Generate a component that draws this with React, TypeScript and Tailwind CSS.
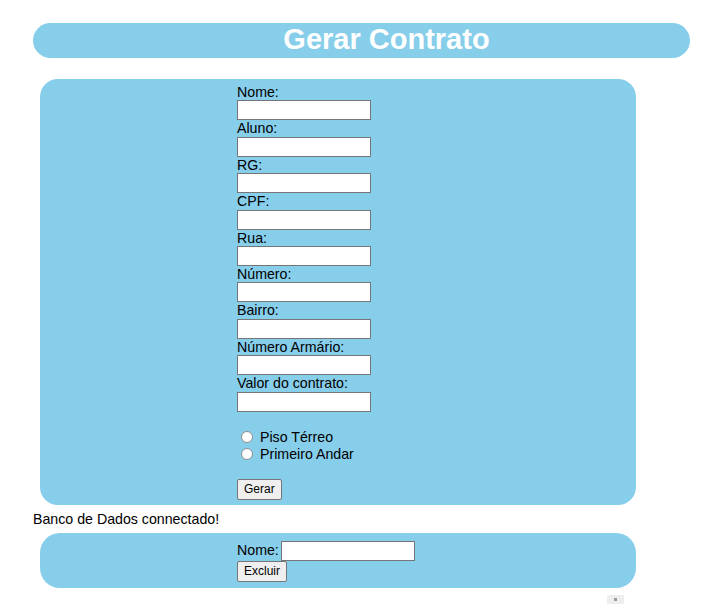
import { useState } from 'react';

const fields = ['Nome:', 'Aluno:', 'RG:', 'CPF:', 'Rua:', 'Número:', 'Bairro:', 'Número Armário:', 'Valor do contrato:'];

export default function App() {
  const [andar, setAndar] = useState('');

  return (
    <div className="w-[710px] min-h-[604px] bg-white pt-[23px] pl-[33px] font-['Liberation_Sans',Arial,sans-serif] text-[14.2px] leading-[16.4px] text-black overflow-hidden">
      <h1 className="w-[657px] h-[35px] rounded-full bg-[#87ceeb] text-center pl-[50px] text-white font-bold text-[29px] leading-[33px]">
        Gerar Contrato
      </h1>

      <form className="mt-[21px] ml-[7px] w-[596px] rounded-[18px] bg-[#87ceeb] pt-[5px] pb-[5px] pl-[197px]">
        {fields.map(f => (
          <div key={f}>
            <label className="block h-[16.4px]">{f}</label>
            <input type="text" className="block w-[134px] h-[20px] border border-[#767676] bg-white px-[2px] outline-none" />
          </div>
        ))}
        <div className="h-[17px]" />
        <label className="flex items-center h-[17px]">
          <input
            type="radio"
            name="andar"
            checked={andar === 'terreo'}
            onChange={() => setAndar('terreo')}
            className="appearance-none ml-[4px] mr-[7px] w-[12px] h-[12px] rounded-full border border-[#8f8f8f] bg-white checked:border-[4px] checked:border-[#0075ff]"
          />
          Piso Térreo
        </label>
        <label className="flex items-center h-[17px]">
          <input
            type="radio"
            name="andar"
            checked={andar === 'primeiro'}
            onChange={() => setAndar('primeiro')}
            className="appearance-none ml-[4px] mr-[7px] w-[12px] h-[12px] rounded-full border border-[#8f8f8f] bg-white checked:border-[4px] checked:border-[#0075ff]"
          />
          Primeiro Andar
        </label>
        <div className="h-[16px]" />
        <button type="button" className="block h-[21px] px-[6px] border border-[#767676] rounded-[2px] bg-[#efefef] text-[12px] leading-[19px]">
          Gerar
        </button>
      </form>

      <p className="mt-[6.5px] h-[16.5px] leading-[16.5px]">Banco de Dados connectado!</p>

      <form className="mt-[5px] ml-[7px] w-[596px] rounded-[20px] bg-[#87ceeb] pt-[8px] pb-[6px] pl-[197px]">
        <div className="flex items-end h-[20px]">
          <label className="mb-[2px]">Nome:</label>
          <input type="text" className="ml-[2px] w-[134px] h-[20px] border border-[#767676] bg-white px-[2px] outline-none" />
        </div>
        <button type="button" className="block h-[21px] px-[6px] border border-[#767676] rounded-[2px] bg-[#efefef] text-[12px] leading-[19px]">
          Excluir
        </button>
      </form>

      <div className="mt-[7px] ml-[574px] w-[17px] h-[20px] bg-[#eeeeee] flex justify-center pt-[3px]">
        <span className="block w-[3px] h-[3px] bg-[#9a9a9a]" />
      </div>
    </div>
  );
}
